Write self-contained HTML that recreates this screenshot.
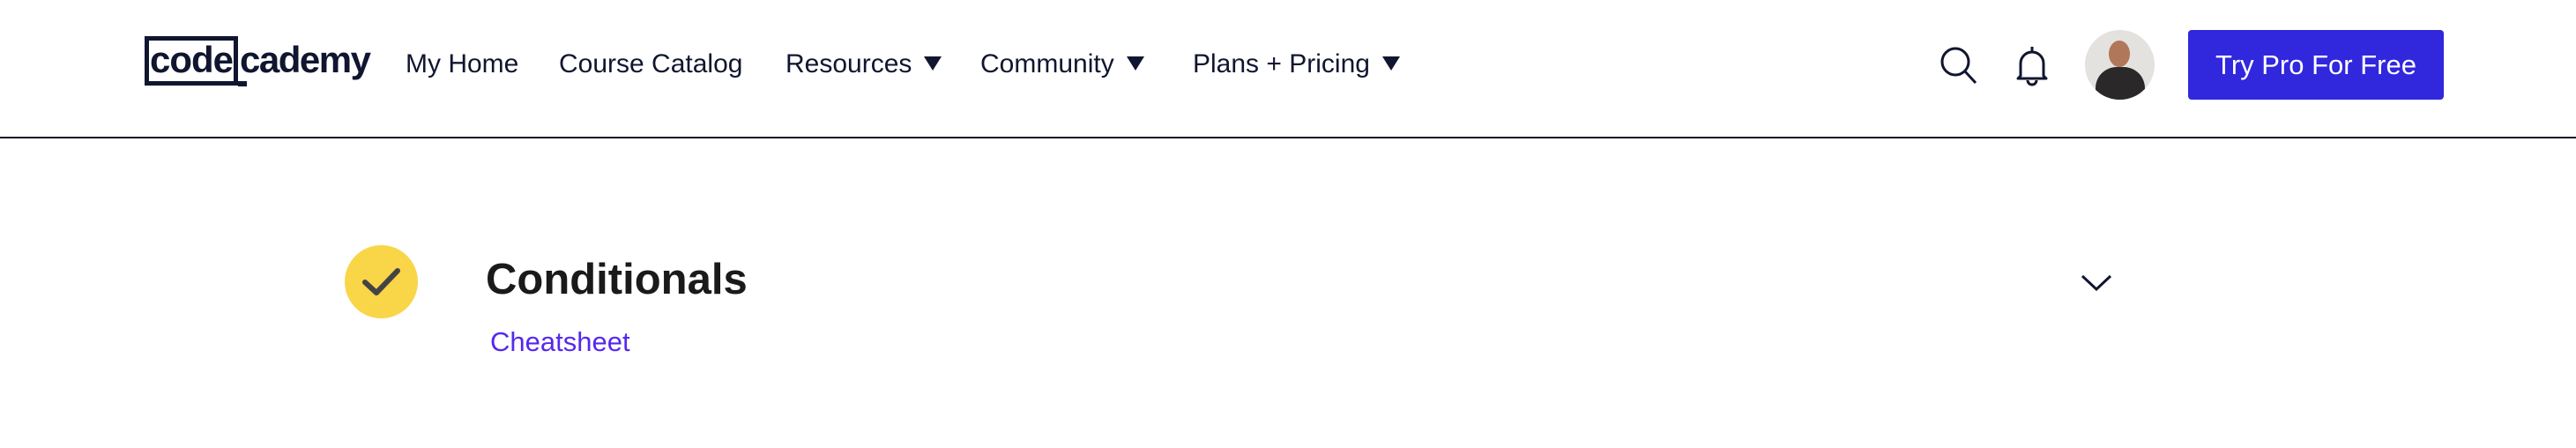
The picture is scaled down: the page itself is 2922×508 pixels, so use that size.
<!DOCTYPE html>
<html><head><meta charset="utf-8"><style>
*{margin:0;padding:0;box-sizing:border-box}
body{width:2922px;height:508px;background:#fff;position:relative;overflow:hidden;font-family:"Liberation Sans",sans-serif;color:#10162f}
.a{position:absolute;white-space:nowrap}
.nav{font-size:30px;top:55px;line-height:36px}
.tri{display:inline-block;width:0;height:0;border-left:10px solid transparent;border-right:10px solid transparent;border-top:16px solid #10162f;margin-left:14px;vertical-align:2px}
</style></head><body>
<div class="a" style="left:164px;top:41px;width:106px;height:56px;border:5px solid #10162f"></div>
<div class="a" style="left:170px;top:46px;font-size:42px;font-weight:bold;letter-spacing:-1px;line-height:44px">code</div>
<div class="a" style="left:272px;top:46px;font-size:42px;font-weight:bold;letter-spacing:-1.5px;line-height:44px">cademy</div>
<div class="a" style="left:270px;top:92px;width:10px;height:6px;background:#10162f"></div>
<div class="a nav" style="left:460px">My Home</div>
<div class="a nav" style="left:634px">Course Catalog</div>
<div class="a nav" style="left:891px">Resources<span class="tri"></span></div>
<div class="a nav" style="left:1112px">Community<span class="tri"></span></div>
<div class="a nav" style="left:1353px">Plans + Pricing<span class="tri"></span></div>
<svg class="a" style="left:2198px;top:50px" width="48" height="48" viewBox="0 0 48 48"><circle cx="20" cy="20" r="15" fill="none" stroke="#10162f" stroke-width="3"/><line x1="31" y1="31" x2="43" y2="44" stroke="#10162f" stroke-width="3"/></svg>
<svg class="a" style="left:2284px;top:50px" width="42" height="48" viewBox="0 0 42 48"><path d="M21 3v5M8 36V22a13 13 0 0 1 26 0v14l3 3H5z" fill="none" stroke="#10162f" stroke-width="3" stroke-linejoin="round"/><path d="M16 41a5 5 0 0 0 10 0" fill="none" stroke="#10162f" stroke-width="3"/></svg>
<div class="a" style="left:2365px;top:34px;width:79px;height:79px;border-radius:50%;background:#e4e2df;overflow:hidden">
<div class="a" style="left:27px;top:12px;width:24px;height:30px;border-radius:50%;background:#b07758"></div>
<div class="a" style="left:12px;top:42px;width:56px;height:50px;border-radius:24px 24px 0 0;background:#2a2828"></div></div>
<div class="a" style="left:2482px;top:34px;width:290px;height:79px;background:#3127dd;border-radius:4px;color:#fff;font-size:31px;line-height:79px;text-align:center">Try Pro For Free</div>
<div class="a" style="left:0;top:155px;width:2922px;height:2px;background:#10162f"></div>
<div class="a" style="left:391px;top:278px;width:83px;height:83px;border-radius:50%;background:#f9d548"></div>
<svg class="a" style="left:391px;top:278px" width="83" height="83" viewBox="0 0 83 83"><path d="M23 42l13 12 24-25" fill="none" stroke="#444" stroke-width="6" stroke-linecap="round" stroke-linejoin="round"/></svg>
<div class="a" style="left:551px;top:289px;font-size:49px;font-weight:bold;color:#1a1a1a;line-height:56px">Conditionals</div>
<div class="a" style="left:556px;top:370px;font-size:31px;color:#5528ee;line-height:36px">Cheatsheet</div>
<svg class="a" style="left:2360px;top:310px" width="36" height="22" viewBox="0 0 36 22"><path d="M2 3l16 15 16-15" fill="none" stroke="#10162f" stroke-width="3"/></svg>
</body></html>
